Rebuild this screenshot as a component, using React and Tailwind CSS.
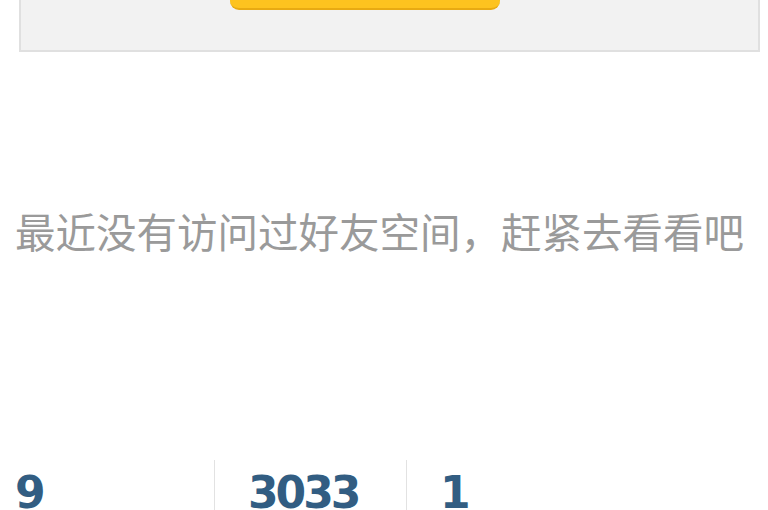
export default function App() {
  return (
    <div className="w-[768px] h-[510px] bg-white overflow-hidden" style={{ fontFamily: '"Noto Sans", "Noto Sans CJK SC", sans-serif' }}>
      <div className="ml-[19px] mr-[8px] h-[52px] bg-[#f2f2f2] border-x-2 border-b-2 border-[#e0e0e0] overflow-hidden">
        <div className="ml-[209px] w-[270px] h-[41px] -mt-[31px] rounded-[9px] bg-[#fdc31f] border-b-2 border-[#e8aa12]" />
      </div>
      <div
        className="mt-[148px] pl-[15px] text-[40.5px] leading-[61px] text-[#9a9a9a] whitespace-nowrap"
        style={{ fontFamily: '"Noto Sans CJK SC", sans-serif' }}
      >
        最近没有访问过好友空间，赶紧去看看吧
      </div>
      <div
        className="mt-[199px] flex h-[60px] pl-[15px] text-[44px] leading-[44px] font-bold tracking-[-3px] text-[#325d82]"
        style={{ fontFamily: '"DejaVu Sans", sans-serif' }}
      >
        <div className="w-[200px] pt-[11px] border-r border-[#e2e2e2]">9</div>
        <div className="w-[192px] pl-[33px] pt-[11px] border-r border-[#e2e2e2]">3033</div>
        <div className="pl-[33px] pt-[11px]">1</div>
      </div>
    </div>
  );
}
